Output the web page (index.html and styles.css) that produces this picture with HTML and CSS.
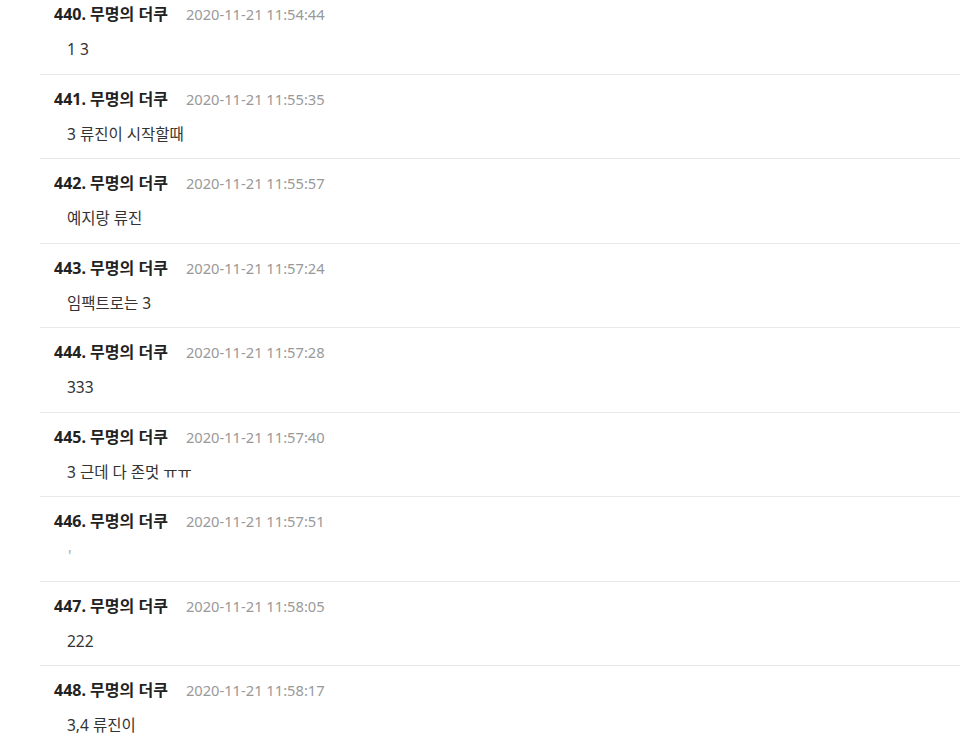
FILE: index.html
```html
<!DOCTYPE html>
<html lang="ko">

<head>
  <meta charset="UTF-8" />
  <meta name="viewport" content="width=device-width, initial-scale=1" />
  <title>무명의 더쿠</title>
  <link rel="stylesheet" href="styles.css">
</head>

<body>
  <div class="comment-list">
    <div class="comment">
      <div class="comment-head"><span class="author">440. 무명의 더쿠</span><span class="date">2020-11-21 11:54:44</span></div>
      <div class="comment-body">1 3</div>
    </div>
    <div class="comment">
      <div class="comment-head"><span class="author">441. 무명의 더쿠</span><span class="date">2020-11-21 11:55:35</span></div>
      <div class="comment-body">3 류진이 시작할때</div>
    </div>
    <div class="comment">
      <div class="comment-head"><span class="author">442. 무명의 더쿠</span><span class="date">2020-11-21 11:55:57</span></div>
      <div class="comment-body">예지랑 류진</div>
    </div>
    <div class="comment">
      <div class="comment-head"><span class="author">443. 무명의 더쿠</span><span class="date">2020-11-21 11:57:24</span></div>
      <div class="comment-body">임팩트로는 3</div>
    </div>
    <div class="comment">
      <div class="comment-head"><span class="author">444. 무명의 더쿠</span><span class="date">2020-11-21 11:57:28</span></div>
      <div class="comment-body">333</div>
    </div>
    <div class="comment">
      <div class="comment-head"><span class="author">445. 무명의 더쿠</span><span class="date">2020-11-21 11:57:40</span></div>
      <div class="comment-body">3 근데 다 존멋 ㅠㅠ</div>
    </div>
    <div class="comment">
      <div class="comment-head"><span class="author">446. 무명의 더쿠</span><span class="date">2020-11-21 11:57:51</span></div>
      <div class="comment-body faint">'</div>
    </div>
    <div class="comment">
      <div class="comment-head"><span class="author">447. 무명의 더쿠</span><span class="date">2020-11-21 11:58:05</span></div>
      <div class="comment-body">222</div>
    </div>
    <div class="comment">
      <div class="comment-head"><span class="author">448. 무명의 더쿠</span><span class="date">2020-11-21 11:58:17</span></div>
      <div class="comment-body">3,4 류진이</div>
    </div>
  </div>
</body>

</html>
```

FILE: styles.css
```css
html,
body {
  margin: 0;
  padding: 0;
  background-color: #fff;
  font-family: "Noto Sans", "Noto Sans CJK KR", sans-serif;
  color: #222;
}

.comment-list {
  margin-top: -10px;
  margin-left: 40px;
}

.comment {
  border-bottom: 1px solid #e8e8e8;
  padding: 12px 14px 12.5px;
}

.comment-head {
  display: flex;
  align-items: baseline;
  gap: 18px;
  line-height: 24px;
}

.author {
  font-size: 16px;
  font-weight: 700;
  color: #222;
}

.date {
  font-size: 14.7px;
  color: #999;
}

.comment-body {
  margin-top: 11px;
  padding-left: 13px;
  font-size: 15.5px;
  line-height: 24px;
  color: #333;
}

.comment-body.faint {
  padding-left: 14px;
  color: #aaa;
}
```
